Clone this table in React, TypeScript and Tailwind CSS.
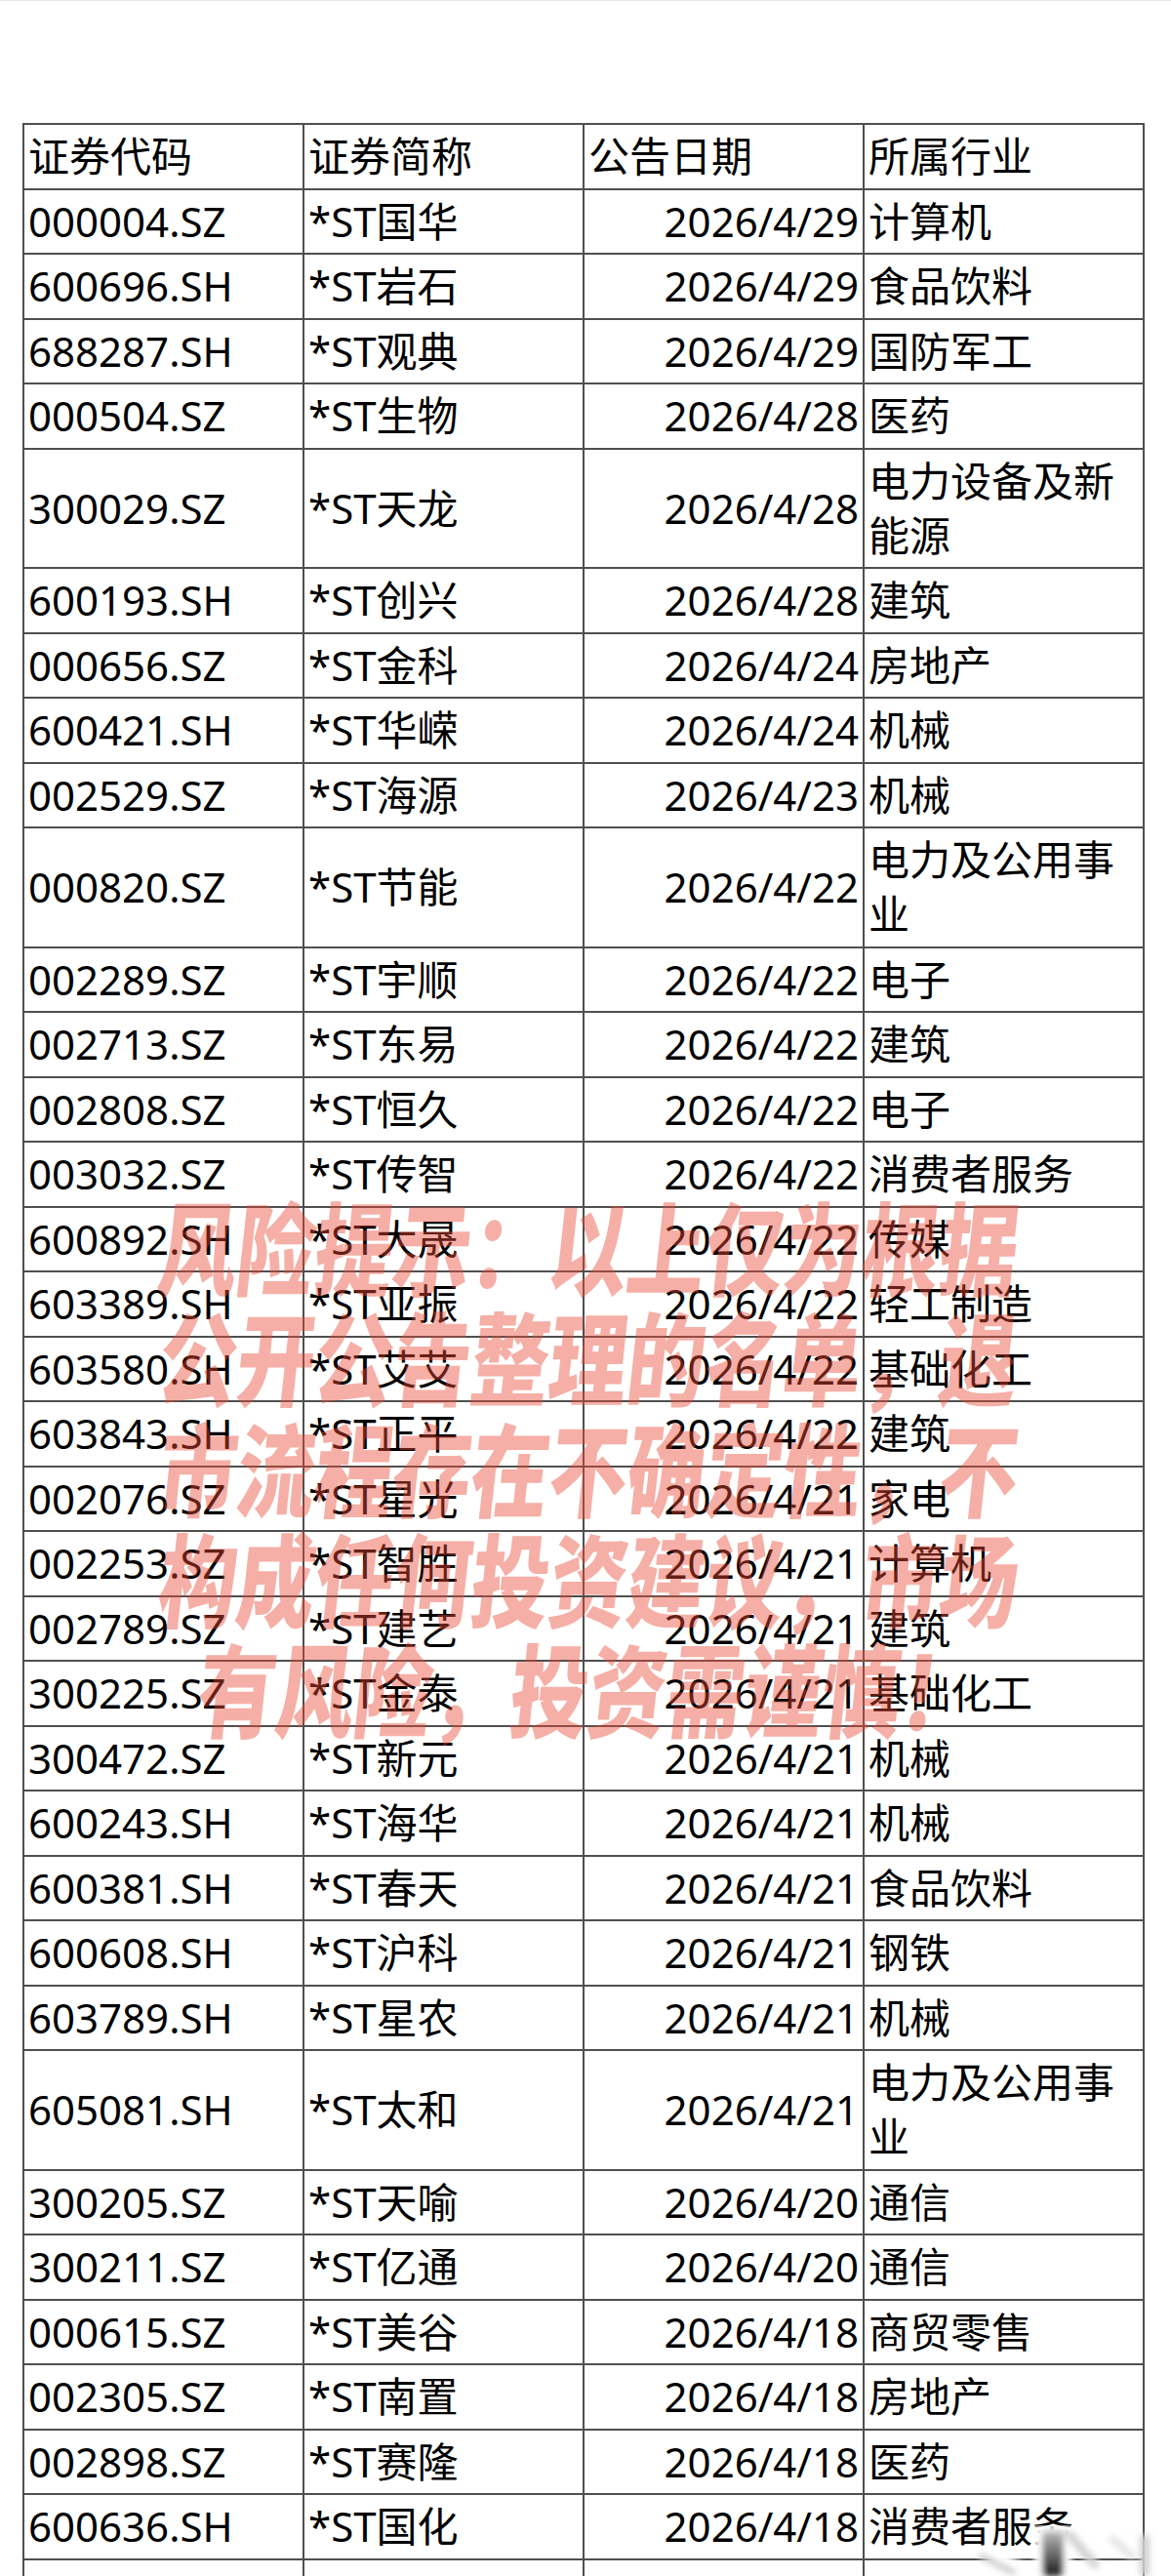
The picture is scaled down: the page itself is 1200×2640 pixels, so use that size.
type Row = {
  code: string;
  name: string;
  date: string;
  industry: string;
};

const rows: Row[] = [
  { code: '000004.SZ', name: '*ST国华', date: '2026/4/29', industry: '计算机' },
  { code: '600696.SH', name: '*ST岩石', date: '2026/4/29', industry: '食品饮料' },
  { code: '688287.SH', name: '*ST观典', date: '2026/4/29', industry: '国防军工' },
  { code: '000504.SZ', name: '*ST生物', date: '2026/4/28', industry: '医药' },
  { code: '300029.SZ', name: '*ST天龙', date: '2026/4/28', industry: '电力设备及新能源' },
  { code: '600193.SH', name: '*ST创兴', date: '2026/4/28', industry: '建筑' },
  { code: '000656.SZ', name: '*ST金科', date: '2026/4/24', industry: '房地产' },
  { code: '600421.SH', name: '*ST华嵘', date: '2026/4/24', industry: '机械' },
  { code: '002529.SZ', name: '*ST海源', date: '2026/4/23', industry: '机械' },
  { code: '000820.SZ', name: '*ST节能', date: '2026/4/22', industry: '电力及公用事业' },
  { code: '002289.SZ', name: '*ST宇顺', date: '2026/4/22', industry: '电子' },
  { code: '002713.SZ', name: '*ST东易', date: '2026/4/22', industry: '建筑' },
  { code: '002808.SZ', name: '*ST恒久', date: '2026/4/22', industry: '电子' },
  { code: '003032.SZ', name: '*ST传智', date: '2026/4/22', industry: '消费者服务' },
  { code: '600892.SH', name: '*ST大晟', date: '2026/4/22', industry: '传媒' },
  { code: '603389.SH', name: '*ST亚振', date: '2026/4/22', industry: '轻工制造' },
  { code: '603580.SH', name: '*ST艾艾', date: '2026/4/22', industry: '基础化工' },
  { code: '603843.SH', name: '*ST正平', date: '2026/4/22', industry: '建筑' },
  { code: '002076.SZ', name: '*ST星光', date: '2026/4/21', industry: '家电' },
  { code: '002253.SZ', name: '*ST智胜', date: '2026/4/21', industry: '计算机' },
  { code: '002789.SZ', name: '*ST建艺', date: '2026/4/21', industry: '建筑' },
  { code: '300225.SZ', name: '*ST金泰', date: '2026/4/21', industry: '基础化工' },
  { code: '300472.SZ', name: '*ST新元', date: '2026/4/21', industry: '机械' },
  { code: '600243.SH', name: '*ST海华', date: '2026/4/21', industry: '机械' },
  { code: '600381.SH', name: '*ST春天', date: '2026/4/21', industry: '食品饮料' },
  { code: '600608.SH', name: '*ST沪科', date: '2026/4/21', industry: '钢铁' },
  { code: '603789.SH', name: '*ST星农', date: '2026/4/21', industry: '机械' },
  { code: '605081.SH', name: '*ST太和', date: '2026/4/21', industry: '电力及公用事业' },
  { code: '300205.SZ', name: '*ST天喻', date: '2026/4/20', industry: '通信' },
  { code: '300211.SZ', name: '*ST亿通', date: '2026/4/20', industry: '通信' },
  { code: '000615.SZ', name: '*ST美谷', date: '2026/4/18', industry: '商贸零售' },
  { code: '002305.SZ', name: '*ST南置', date: '2026/4/18', industry: '房地产' },
  { code: '002898.SZ', name: '*ST赛隆', date: '2026/4/18', industry: '医药' },
  { code: '600636.SH', name: '*ST国化', date: '2026/4/18', industry: '消费者服务' },
];

const warning = [
  '风险提示：以上仅为根据',
  '公开公告整理的名单，退',
  '市流程存在不确定性，不',
  '构成任何投资建议，市场',
  '有风险，投资需谨慎！',
];

const cell = 'border-2 border-[#4f4f4f] px-1 py-[4.25px] font-normal align-middle';

// blurred account stamp in the bottom right corner
const Stamp = () => (
  <svg
    className="pointer-events-none absolute bottom-0 right-0"
    width="200"
    height="52"
    viewBox="0 0 200 52"
  >
    <defs>
      <filter id="soft" x="-50%" y="-50%" width="200%" height="200%">
        <feGaussianBlur stdDeviation="3" />
      </filter>
      <linearGradient id="bar" x1="0" y1="0" x2="0" y2="1">
        <stop offset="0" stopColor="#bdbdbd" />
        <stop offset="1" stopColor="#1a1a1a" />
      </linearGradient>
    </defs>
    <g filter="url(#soft)">
      <path d="M0 26 L44 52 L70 52 L20 22 Z" fill="#ffffff" />
      <path d="M6 32 L38 48" stroke="#c9c9c9" strokeWidth="6" strokeLinecap="round" />
      <rect x="60" y="0" width="38" height="52" fill="#ffffff" />
      <rect x="68" y="6" width="22" height="46" fill="url(#bar)" />
      <path d="M96 10 L122 40" stroke="#d2d2d2" strokeWidth="9" strokeLinecap="round" />
      <path d="M140 14 L160 32" stroke="#e2e2e2" strokeWidth="7" strokeLinecap="round" />
      <rect x="168" y="10" width="10" height="42" fill="#d0d0d0" />
    </g>
  </svg>
);

export default function App() {
  return (
    <div className="relative h-[2640px] w-[1200px] overflow-hidden border-t border-[#e6e6e6] bg-white text-black font-[family-name:'Noto_Sans','Noto_Sans_CJK_SC',sans-serif]">
      <table className="ml-[23px] mt-[125px] w-[1150px] table-fixed border-collapse border-2 border-[#4f4f4f] text-[42px] leading-[56px]">
        <colgroup>
          <col className="w-[287px]" />
          <col className="w-[287px]" />
          <col className="w-[287px]" />
          <col className="w-[287px]" />
        </colgroup>
        <thead>
          <tr>
            <th className={`${cell} text-left`}>证券代码</th>
            <th className={`${cell} text-left`}>证券简称</th>
            <th className={`${cell} text-left`}>公告日期</th>
            <th className={`${cell} text-left`}>所属行业</th>
          </tr>
        </thead>
        <tbody>
          {rows.map((r) => (
            <tr key={r.code}>
              <td className={`${cell} text-left`}>{r.code}</td>
              <td className={`${cell} text-left`}>{r.name}</td>
              <td className={`${cell} text-right`}>{r.date}</td>
              <td className={`${cell} text-left`}>{r.industry}</td>
            </tr>
          ))}
          <tr>
            <td className={cell}>&nbsp;</td>
            <td className={cell}>&nbsp;</td>
            <td className={cell}>&nbsp;</td>
            <td className={cell}>&nbsp;</td>
          </tr>
        </tbody>
      </table>

      <div className="pointer-events-none absolute left-[8px] right-0 top-[1218px] origin-top scale-y-[1.3] text-center font-[family-name:'Noto_Sans_CJK_SC',sans-serif] text-[80px] font-black leading-[87px] text-[rgba(232,72,52,0.44)]">
        {warning.map((line) => (
          <div key={line}>
            <span className="inline-block -skew-x-[8deg]">{line}</span>
          </div>
        ))}
      </div>

      <Stamp />
    </div>
  );
}
